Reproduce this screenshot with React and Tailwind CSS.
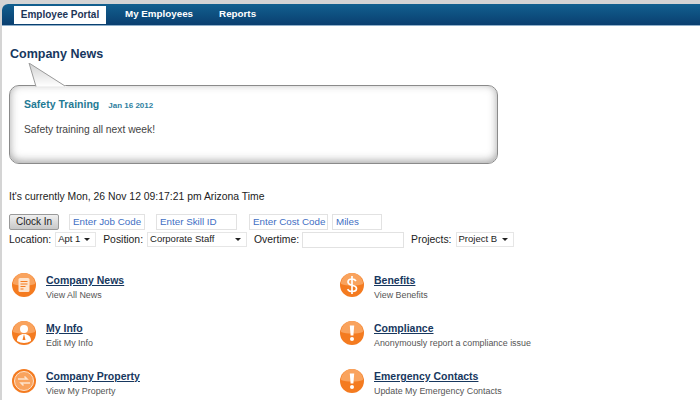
import React from 'react';

const font = { fontFamily: '"Liberation Sans", Arial, sans-serif' };

function NewsIcon() {
  return (
    <svg viewBox="0 0 24 24" className="w-full h-full">
      <circle cx="12" cy="12" r="12" fill="#f47b20" />
      <path d="M1 11a11 11 0 0 1 22 0c-6 2-16 2-22 0z" fill="#f9a35e" />
      <rect x="6.500" y="5" width="11" height="14" rx="1.500" fill="#fde3cd" />
      <path d="M8.500 8.500h7M8.500 11h7M8.500 13.500h5M8.500 16h3" stroke="#f47b20" strokeWidth="1" />
    </svg>
  );
}

function PersonIcon() {
  return (
    <svg viewBox="0 0 24 24" className="w-full h-full">
      <circle cx="12" cy="12" r="12" fill="#f47b20" />
      <path d="M1 11a11 11 0 0 1 22 0c-6 2-16 2-22 0z" fill="#f9a35e" />
      <circle cx="12" cy="8" r="4" fill="#fff" />
      <path d="M5 20c0-5 3-7 7-7s7 2 7 7c-4 2.500-10 2.500-14 0z" fill="#fff" />
      <path d="M12 13l-1.500 6h3z" fill="#f47b20" />
    </svg>
  );
}

function SwapIcon() {
  return (
    <svg viewBox="0 0 24 24" className="w-full h-full">
      <circle cx="12" cy="12" r="12" fill="#f47b20" />
      <circle cx="12" cy="12" r="9.500" fill="#f9a35e" stroke="#fde3cd" strokeWidth="1" />
      <path d="M6 10h9l-2.500-2.500M18 14H9l2.500 2.500" fill="none" stroke="#fde3cd" strokeWidth="1.500" />
    </svg>
  );
}

function DollarIcon() {
  return (
    <svg viewBox="0 0 24 24" className="w-full h-full">
      <circle cx="12" cy="12" r="12" fill="#f47b20" />
      <path d="M1 11a11 11 0 0 1 22 0c-6 2-16 2-22 0z" fill="#f9a35e" />
      <path d="M16 8c-1-1.500-2.500-2-4-2-2.200 0-4 1-4 3 0 4.500 8.500 2 8.500 6.500 0 2-2 3-4.500 3-1.800 0-3.500-.7-4.500-2.300M12 3v18" fill="none" stroke="#fff" strokeWidth="1.700" />
    </svg>
  );
}

function AlertIcon() {
  return (
    <svg viewBox="0 0 24 24" className="w-full h-full">
      <circle cx="12" cy="12" r="12" fill="#f47b20" />
      <path d="M1 11a11 11 0 0 1 22 0c-6 2-16 2-22 0z" fill="#f9a35e" />
      <path d="M9.800 4.500h4.400l-.8 10h-2.800z" fill="#fff" />
      <circle cx="12" cy="18" r="2" fill="#fff" />
    </svg>
  );
}

function LinkRow({ icon, title, sub }) {
  return (
    <div className="flex h-[48px] items-start">
      <div className="w-[24px] h-[24px] shrink-0 mt-[3px]">{icon}</div>
      <div className="ml-[10px]">
        <a className="block text-[10.500px] leading-[14px] font-bold text-[#17375e] underline mt-[3px]">{title}</a>
        <div className="text-[8.900px] leading-[12px] text-[#555] mt-[2px]">{sub}</div>
      </div>
    </div>
  );
}

function TextBox({ width, children }) {
  return (
    <div className={`h-[16px] border border-[#e2e2e2] pl-[3px] text-[9.800px] leading-[14px] whitespace-nowrap text-[#3f6fc4] ${width}`}>
      {children}
    </div>
  );
}

function Dropdown({ width, children }) {
  return (
    <div className={`h-[15px] flex items-center justify-between border border-[#e6e6e6] pl-[2px] pr-[5px] text-[9.500px] whitespace-nowrap text-[#222] ${width}`}>
      <span>{children}</span>
      <span className="w-0 h-0 border-x-[3px] border-x-transparent border-t-[3px] border-t-[#222]"></span>
    </div>
  );
}

function App() {
  return (
    <div className="w-[700px] h-[400px] overflow-hidden bg-[#d4d4d4] pt-[4px] pl-[2px]" style={font}>
      <div className="h-[396px] bg-white overflow-hidden rounded-tl-[6px]">
        {/* nav */}
        <div className="h-[22px] flex items-center pl-[12px] bg-gradient-to-b from-[#12608f] to-[#0a3f70] border-b border-[#8fb0cb]">
          <div className="w-[92px] h-[18px] bg-white text-center text-[10px] leading-[18px] font-bold text-[#1d3557]">Employee Portal</div>
          <div className="ml-[19px] text-[9.800px] font-bold text-white">My Employees</div>
          <div className="ml-[26px] text-[9.800px] font-bold text-white">Reports</div>
        </div>

        <div className="pl-[7px]">
          <h1 className="mt-[20px] ml-[1px] text-[12.500px] leading-[16px] font-bold text-[#17375e]">Company News</h1>

          {/* bubble */}
          <div className="relative mt-[23px] w-[489px] h-[79px] rounded-[10px] border border-[#8a8a8a] bg-white shadow-[inset_0_-2px_9px_rgba(90,90,90,0.55)] pl-[14px] pt-[11px]">
            <svg className="absolute left-[17px] top-[-23px] w-[42px] h-[25px]" viewBox="0 0 42 25">
              <defs>
                <linearGradient id="tail" x1="0" y1="0" x2="0" y2="1">
                  <stop offset="0" stopColor="#d0d0d0" />
                  <stop offset="1" stopColor="#ffffff" />
                </linearGradient>
              </defs>
              <path d="M2 0L9 23.500H41.500L39 23z" fill="url(#tail)" />
              <path d="M9 23.500L2 0L38 23" fill="none" stroke="#9a9a9a" strokeWidth="1" />
            </svg>
            <div className="flex items-baseline">
              <span className="text-[10.500px] leading-[14px] font-bold text-[#1f7a94]">Safety Training</span>
              <span className="ml-[9px] text-[8px] font-bold text-[#2f7f9f]">Jan 16 2012</span>
            </div>
            <div className="mt-[11px] text-[10.300px] leading-[14px] text-[#444]">Safety training all next week!</div>
          </div>

          <div className="mt-[26px] text-[10.400px] leading-[14px] text-[#222]">It's currently Mon, 26 Nov 12 09:17:21 pm Arizona Time</div>

          {/* clock in row */}
          <div className="mt-[10px] flex items-center">
            <div className="w-[50px] h-[16px] border border-[#999] bg-gradient-to-b from-[#f0f0f0] to-[#c8c8c8] rounded-[2px] text-center text-[10px] leading-[14px] text-[#222]">Clock In</div>
            <div className="ml-[10px]"><TextBox width="w-[76px]">Enter Job Code</TextBox></div>
            <div className="ml-[11px]"><TextBox width="w-[81px]">Enter Skill ID</TextBox></div>
            <div className="ml-[12px]"><TextBox width="w-[79px]">Enter Cost Code</TextBox></div>
            <div className="ml-[4px]"><TextBox width="w-[50px]">Miles</TextBox></div>
          </div>

          {/* location row */}
          <div className="mt-[1px] flex items-center text-[10.400px] text-[#222] h-[17px]">
            <span>Location:</span>
            <div className="ml-[4px]"><Dropdown width="w-[41px]">Apt 1</Dropdown></div>
            <span className="ml-[7px]">Position:</span>
            <div className="ml-[4px]"><Dropdown width="w-[100px]">Corporate Staff</Dropdown></div>
            <span className="ml-[7px]">Overtime:</span>
            <div className="ml-[3px] w-[102px] h-[16px] border border-[#e2e2e2]"></div>
            <span className="ml-[7px]">Projects:</span>
            <div className="ml-[4px]"><Dropdown width="w-[58px]">Project B</Dropdown></div>
          </div>

          {/* links */}
          <div className="mt-[22px] grid grid-cols-[328px_1fr] pl-[3px]">
            <div>
              <LinkRow icon={<NewsIcon />} title="Company News" sub="View All News" />
              <LinkRow icon={<PersonIcon />} title="My Info" sub="Edit My Info" />
              <LinkRow icon={<SwapIcon />} title="Company Property" sub="View My Property" />
            </div>
            <div>
              <LinkRow icon={<DollarIcon />} title="Benefits" sub="View Benefits" />
              <LinkRow icon={<AlertIcon />} title="Compliance" sub="Anonymously report a compliance issue" />
              <LinkRow icon={<AlertIcon />} title="Emergency Contacts" sub="Update My Emergency Contacts" />
            </div>
          </div>
        </div>
      </div>
    </div>
  );
}

export default App;
